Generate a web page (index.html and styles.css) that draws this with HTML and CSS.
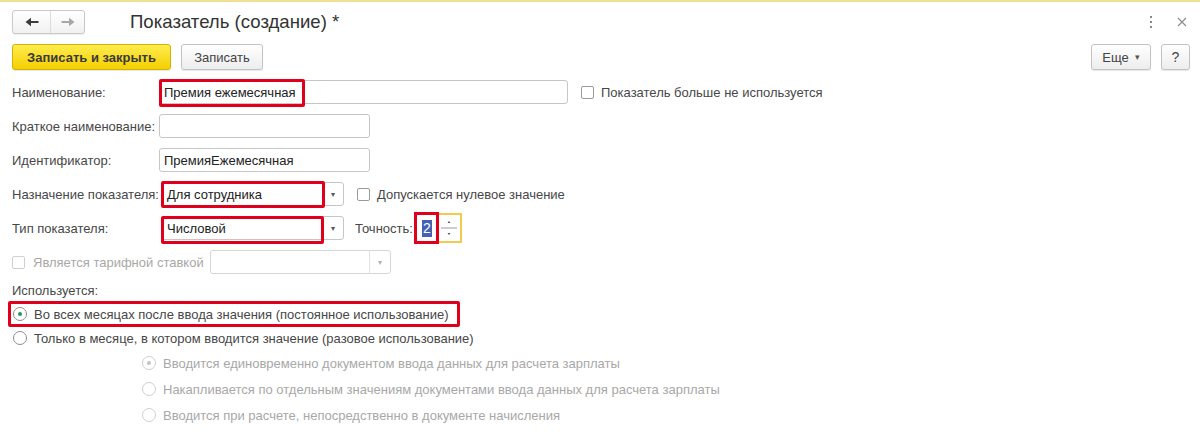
FILE: index.html
```html
<!DOCTYPE html>
<html lang="ru">
<head>
<meta charset="utf-8">
<title>Показатель (создание)</title>
<link rel="stylesheet" href="styles.css">
</head>
<body>
<div class="topline"></div>
<header class="header">
  <div class="nav">
    <div class="nav-btn back">
      <svg width="14" height="10" viewBox="0 0 14 10"><path d="M0.5 5 L6 0.8 L6 3.9 L13.5 3.9 L13.5 6.1 L6 6.1 L6 9.2 Z" fill="#3c3c3c"/></svg>
    </div>
    <div class="nav-btn fwd">
      <svg width="14" height="10" viewBox="0 0 14 10"><path d="M13.5 5 L8 0.8 L8 3.9 L0.5 3.9 L0.5 6.1 L8 6.1 L8 9.2 Z" fill="#a8a8a8"/></svg>
    </div>
  </div>
  <h1 class="title">Показатель (создание) *</h1>
  <div class="win-ctrls">
    <svg class="kebab" width="4" height="14" viewBox="0 0 4 14"><rect x="1" y="1" width="2" height="2" fill="#888"/><rect x="1" y="6" width="2" height="2" fill="#888"/><rect x="1" y="11" width="2" height="2" fill="#888"/></svg>
    <svg class="close" width="10" height="10" viewBox="0 0 10 10"><path d="M1 1 L9 9 M9 1 L1 9" stroke="#8a8a8a" stroke-width="1.1"/></svg>
  </div>
</header>

<div class="toolbar">
  <button class="btn primary">Записать и закрыть</button>
  <button class="btn save">Записать</button>
  <div class="spacer"></div>
  <button class="btn more-btn">Еще <span class="caret">▾</span></button>
  <button class="btn help">?</button>
</div>

<div class="form">
  <div class="row">
    <div class="label">Наименование:</div>
    <div class="input w-name">Премия ежемесячная<span class="mark mark-name"></span></div>
    <span class="check c-unused"></span><span class="check-text">Показатель больше не используется</span>
  </div>
  <div class="row">
    <div class="label">Краткое наименование:</div>
    <div class="input w-short"></div>
  </div>
  <div class="row">
    <div class="label">Идентификатор:</div>
    <div class="input w-short">ПремияЕжемесячная</div>
  </div>
  <div class="row">
    <div class="label">Назначение показателя:</div>
    <div class="select w-sel">
      <span class="sel-text">Для сотрудника</span>
      <span class="sel-btn"><span class="arrow">▾</span></span>
      <span class="mark mark-sel"></span>
    </div>
    <span class="check c-zero"></span><span class="check-text">Допускается нулевое значение</span>
  </div>
  <div class="row">
    <div class="label">Тип показателя:</div>
    <div class="select w-sel">
      <span class="sel-text">Числовой</span>
      <span class="sel-btn"><span class="arrow">▾</span></span>
      <span class="mark mark-sel2"></span>
    </div>
    <span class="prec-label">Точность:</span>
    <div class="num">
      <div class="num-val"><span class="sel-hl">2</span></div>
      <div class="spin">
        <svg width="18" height="22" viewBox="0 0 18 22"><path d="M7.5 6 L9 4 L10.5 6 Z" fill="#555"/><line x1="1" y1="11" x2="17" y2="11" stroke="#9a9a9a" stroke-width="1"/><path d="M7.5 16 L9 18 L10.5 16 Z" fill="#555"/></svg>
      </div>
    </div>
  </div>
  <div class="row">
    <span class="check disabled c-tariff"></span><span class="check-text disabled-text tariff-text">Является тарифной ставкой</span>
    <div class="select disabled-sel w-tariff">
      <span class="sel-text"></span>
      <span class="sel-btn"><span class="arrow">▾</span></span>
    </div>
  </div>

  <div class="used-label">Используется:</div>
  <div class="radio-row">
    <span class="radio checked"></span><span class="radio-text">Во всех месяцах после ввода значения (постоянное использование)</span>
    <span class="mark mark-radio"></span>
  </div>
  <div class="radio-row">
    <span class="radio"></span><span class="radio-text">Только в месяце, в котором вводится значение (разовое использование)</span>
  </div>
  <div class="sub-row">
    <span class="radio dis checked"></span><span class="radio-text disabled-text">Вводится единовременно документом ввода данных для расчета зарплаты</span>
  </div>
  <div class="sub-row">
    <span class="radio dis"></span><span class="radio-text disabled-text">Накапливается по отдельным значениям документами ввода данных для расчета зарплаты</span>
  </div>
  <div class="sub-row">
    <span class="radio dis"></span><span class="radio-text disabled-text">Вводится при расчете, непосредственно в документе начисления</span>
  </div>
</div>
</body>
</html>
```

FILE: styles.css
```css
html, body {
  margin: 0;
  padding: 0;
}
body {
  width: 1200px;
  height: 436px;
  overflow: hidden;
  background: #fff;
  font-family: "Liberation Sans", Arial, sans-serif;
  font-size: 13px;
  color: #474747;
}
.topline {
  height: 2px;
  background: #f1df92;
}
.header {
  display: flex;
  align-items: center;
  height: 24px;
  margin-top: 8px;
  padding-left: 12px;
  padding-right: 12px;
}
.nav {
  display: flex;
  width: 73px;
  height: 24px;
  box-sizing: border-box;
  border: 1px solid #c9c9c9;
  border-radius: 3px;
  background: linear-gradient(#ffffff, #f1f1f1);
  box-shadow: 0 1px 1px rgba(0, 0, 0, 0.08);
}
.nav-btn {
  display: flex;
  align-items: center;
  justify-content: center;
}
.nav-btn.back {
  width: 37px;
  border-right: 1px solid #dcdcdc;
}
.nav-btn.fwd {
  flex: 1;
}
.title {
  margin: 0 0 0 45px;
  font-size: 18.6px;
  font-weight: normal;
  color: #333;
  line-height: 24px;
}
.win-ctrls {
  margin-left: auto;
  display: flex;
  align-items: center;
}
.kebab {
  margin-right: 24px;
}
.close {
  margin-right: 1px;
}
.toolbar {
  display: flex;
  align-items: center;
  height: 26px;
  margin-top: 10px;
  padding: 0 10px 0 12px;
  gap: 10px;
}
.btn {
  height: 26px;
  box-sizing: border-box;
  border: 1px solid #c2c2c2;
  border-radius: 3px;
  background: linear-gradient(#ffffff, #ededed);
  box-shadow: 0 1px 1px rgba(0, 0, 0, 0.1);
  font-family: inherit;
  font-size: 13px;
  color: #444;
  padding: 0;
  display: flex;
  align-items: center;
  justify-content: center;
}
.btn.primary {
  width: 159px;
  background: linear-gradient(#ffec4f, #f4cf00);
  border-color: #d4b300;
  color: #3a3a3a;
  font-weight: bold;
}
.btn.save {
  width: 82px;
}
.spacer {
  flex: 1;
}
.btn.more-btn {
  width: 60px;
}
.caret {
  font-size: 9px;
  margin-left: 6px;
  color: #555;
}
.btn.help {
  width: 29px;
  font-size: 14px;
}
.form {
  margin-top: 5px;
  padding-left: 12px;
}
.row {
  display: flex;
  align-items: center;
  height: 34px;
}
.label {
  width: 147px;
  flex: none;
  white-space: nowrap;
}
.input {
  position: relative;
  height: 24px;
  box-sizing: border-box;
  border: 1px solid #c6c6c6;
  border-radius: 3px;
  padding: 0 4px;
  display: flex;
  align-items: center;
  color: #222;
}
.w-name {
  width: 409px;
}
.w-short {
  width: 211px;
}
.mark {
  position: absolute;
  box-sizing: border-box;
  border: 3px solid #e0001b;
  border-radius: 2px;
  pointer-events: none;
}
.mark-name {
  left: -1px;
  top: -2px;
  width: 146px;
  height: 28px;
}
.check {
  width: 13px;
  height: 13px;
  box-sizing: border-box;
  border: 1px solid #9a9a9a;
  border-radius: 2px;
  background: #fff;
  flex: none;
}
.check-text {
  margin-left: 7px;
  white-space: nowrap;
}
.c-unused {
  margin-left: 13px;
}
.select {
  position: relative;
  height: 24px;
  box-sizing: border-box;
  border: 1px solid #c6c6c6;
  border-radius: 3px;
  display: flex;
  align-items: stretch;
  color: #222;
}
.w-sel {
  width: 183px;
  margin-left: 2px;
}
.sel-text {
  flex: 1;
  display: flex;
  align-items: center;
  padding-left: 5px;
}
.sel-btn {
  width: 20px;
  border-left: 1px solid #dedede;
  display: flex;
  align-items: center;
  justify-content: center;
}
.arrow {
  font-size: 8px;
  color: #555;
}
.mark-sel {
  left: -1px;
  top: -2px;
  width: 164px;
  height: 27px;
}
.mark-sel2 {
  left: -1px;
  top: -1px;
  width: 163px;
  height: 28px;
}
.c-zero {
  margin-left: 13px;
}
.prec-label {
  margin-left: 11px;
  white-space: nowrap;
}
.num {
  display: flex;
  align-items: center;
  margin-left: 1px;
}
.num-val {
  width: 25px;
  height: 32px;
  box-sizing: border-box;
  border: 3px solid #e0001b;
  display: flex;
  align-items: center;
  justify-content: flex-end;
  padding-right: 4px;
  color: #fff;
  font-size: 14px;
}
.sel-hl {
  background: #4662b4;
  line-height: 17px;
  padding: 0 1px;
}
.spin {
  width: 23px;
  height: 30px;
  box-sizing: border-box;
  border: 2px solid #f1cc4c;
  border-left: none;
  display: flex;
  align-items: center;
  justify-content: center;
}
.disabled {
  border-color: #d0d0d0;
}
.disabled-text {
  color: #a8a8a8;
}
.c-tariff {
  margin-left: 0;
}
.tariff-text {
  margin-left: 8px;
}
.disabled-sel {
  border-color: #d6d6d6;
}
.disabled-sel .sel-btn {
  border-left-color: #e2e2e2;
}
.disabled-sel .arrow {
  color: #b0b0b0;
}
.w-tariff {
  width: 181px;
  margin-left: 6px;
}
.used-label {
  height: 23px;
  display: flex;
  align-items: center;
}
.radio-row {
  position: relative;
  height: 24px;
  display: flex;
  align-items: center;
}
.radio {
  width: 14px;
  height: 14px;
  box-sizing: border-box;
  border: 1px solid #8e8e8e;
  border-radius: 50%;
  background: #fff;
  flex: none;
  margin-left: 1px;
  position: relative;
}
.radio.checked::after {
  content: "";
  position: absolute;
  left: 4px;
  top: 4px;
  width: 4px;
  height: 4px;
  border-radius: 50%;
  background: #1f9a56;
}
.radio-text {
  margin-left: 7px;
  white-space: nowrap;
}
.mark-radio {
  left: -4px;
  top: -1px;
  width: 452px;
  height: 26px;
}
.sub-row {
  height: 26px;
  display: flex;
  align-items: center;
  padding-left: 129px;
}
.radio.dis {
  border-color: #cfcfcf;
}
.radio.dis.checked::after {
  background: #c4c4c4;
}
.sub-row .radio-text {
  margin-left: 7px;
}
```
